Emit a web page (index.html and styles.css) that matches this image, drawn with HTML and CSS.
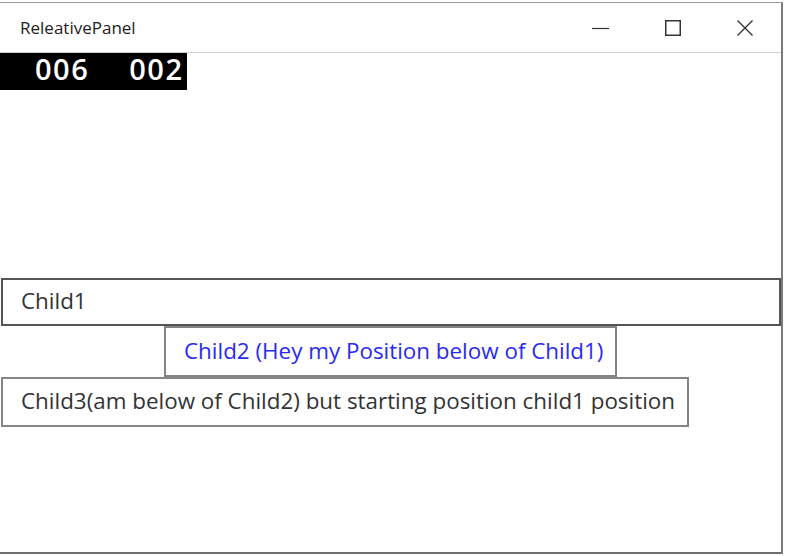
FILE: index.html
```html
<!DOCTYPE html>
<html>
<head>
<meta charset="utf-8">
<link rel="stylesheet" href="styles.css">
</head>
<body>
<div class="window">
  <div class="titlebar">
    <span class="title">ReleativePanel</span>
    <div class="controls">
      <div class="btn"><svg width="18" height="16" viewBox="0 0 18 16"><line x1="0" y1="8.5" x2="17" y2="8.5" stroke="#333" stroke-width="1.2"/></svg></div>
      <div class="btn"><svg width="16" height="16" viewBox="0 0 16 16"><rect x="0.75" y="0.75" width="14.5" height="14.5" fill="none" stroke="#333" stroke-width="1.5"/></svg></div>
      <div class="btn"><svg width="16" height="16" viewBox="0 0 16 16"><path d="M0.5 0.5 L15.5 15.5 M15.5 0.5 L0.5 15.5" stroke="#333" stroke-width="1.4" fill="none"/></svg></div>
    </div>
  </div>
  <div class="content">
    <div class="counter"><span>006</span><span>002</span></div>
    <div class="panel">
      <div class="box child1">Child1</div>
      <div class="box child2">Child2 (Hey my Position below of Child1)</div>
      <div class="box child3">Child3(am below of Child2) but starting position child1 position</div>
    </div>
  </div>
</div>
</body>
</html>
```
FILE: styles.css
```css
html, body {
  margin: 0;
  padding: 0;
  background: #ffffff;
}
body {
  width: 787px;
  height: 556px;
  overflow: hidden;
  font-family: "Open Sans", "Noto Sans", sans-serif;
}
.window {
  margin-top: 2px;
  width: 781px;
  height: 549px;
  border-top: 1px solid #9a9a9a;
  border-right: 2px solid #7a7a7a;
  border-bottom: 2px solid #6e6e6e;
  background: #fff;
  display: flex;
  flex-direction: column;
}
.titlebar {
  height: 49px;
  border-bottom: 1px solid #cfcfcf;
  display: flex;
  align-items: center;
  justify-content: space-between;
}
.title {
  margin-left: 20px;
  font-size: 17px;
  color: #222;
}
.controls {
  display: flex;
  height: 100%;
}
.btn {
  width: 72px;
  display: flex;
  align-items: center;
  justify-content: center;
}
.btn svg { display: block; }
.content {
  flex: 1;
  display: flex;
  flex-direction: column;
}
.counter {
  width: 187px;
  height: 37px;
  background: #000;
  color: #fff;
  font-size: 29px;
  font-weight: 600;
  letter-spacing: 1.5px;
  display: flex;
  align-items: center;
  gap: 40px;
  padding-left: 35px;
  padding-bottom: 6px;
  box-sizing: border-box;
  line-height: 1;
}
.panel {
  margin-top: 188px;
  display: flex;
  flex-direction: column;
  align-items: flex-start;
}
.box {
  box-sizing: border-box;
  border: 2px solid #858585;
  background: #fff;
  font-size: 22.4px;
  color: #333;
  padding-left: 18px;
  padding-bottom: 3px;
  display: flex;
  align-items: center;
  white-space: nowrap;
}
.child1 {
  margin-left: 1px;
  width: 780px;
  height: 48px;
  border-color: #555;
}
.child2 {
  margin-left: 164px;
  width: 453px;
  height: 51px;
  color: #2a2af0;
}
.child3 {
  margin-left: 1px;
  width: 688px;
  height: 50px;
}
```
